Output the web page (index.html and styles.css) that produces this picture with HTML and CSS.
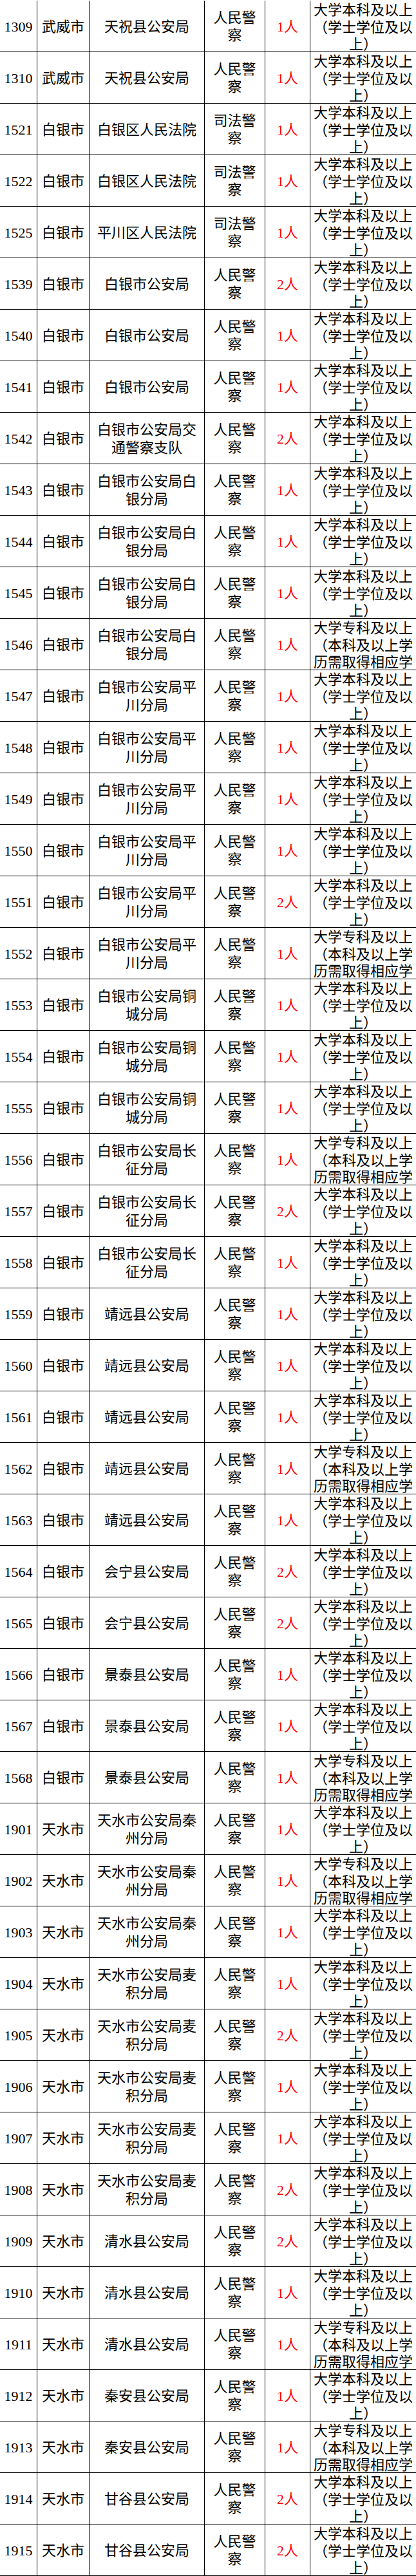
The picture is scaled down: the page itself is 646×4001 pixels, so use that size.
FILE: index.html
```html
<!DOCTYPE html>
<html lang="zh-CN">
<head>
<meta charset="utf-8">
<title>职位表</title>
<link rel="stylesheet" href="styles.css">
</head>
<body>
<div class="sheet" id="sheet"></div>
<script src="script.js"></script>
</body>
</html>
```

FILE: styles.css
```css
html, body {
  margin: 0;
  padding: 0;
  background: #ffffff;
}

.sheet {
  width: 646px;
  padding-top: 1px;
  font-family: "Liberation Serif", "Noto Sans CJK SC", serif;
  font-size: 22px;
  line-height: 26.7px;
  color: #000000;
}

.row {
  display: grid;
  grid-template-columns: 58px 81px 179px 94px 70px 164px;
  height: 80px;
  box-sizing: border-box;
  border-bottom: 1px solid #000000;
}

.cell {
  display: flex;
  align-items: center;
  justify-content: center;
  text-align: center;
  overflow: hidden;
  padding: 3px 4px 0;
  border-right: 1px solid #000000;
  min-width: 0;
}

.code {
  padding: 3px 0 0;
}

.unit {
  line-height: 28.3px;
}

.num {
  color: #ff0000;
}

.req {
  border-right: none;
  align-items: flex-start;
  padding: 2px 2px 0;
  line-height: 26.7px;
}
```

FILE: script.js
```js
var B = "大学本科及以上（学士学位及以上）";
var Z = "大学专科及以上（本科及以上学历需取得相应学位）";
var rows = [
["1309","武威市","天祝县公安局","人民警察",1,B],
["1310","武威市","天祝县公安局","人民警察",1,B],
["1521","白银市","白银区人民法院","司法警察",1,B],
["1522","白银市","白银区人民法院","司法警察",1,B],
["1525","白银市","平川区人民法院","司法警察",1,B],
["1539","白银市","白银市公安局","人民警察",2,B],
["1540","白银市","白银市公安局","人民警察",1,B],
["1541","白银市","白银市公安局","人民警察",1,B],
["1542","白银市","白银市公安局交通警察支队","人民警察",2,B],
["1543","白银市","白银市公安局白银分局","人民警察",1,B],
["1544","白银市","白银市公安局白银分局","人民警察",1,B],
["1545","白银市","白银市公安局白银分局","人民警察",1,B],
["1546","白银市","白银市公安局白银分局","人民警察",1,Z],
["1547","白银市","白银市公安局平川分局","人民警察",1,B],
["1548","白银市","白银市公安局平川分局","人民警察",1,B],
["1549","白银市","白银市公安局平川分局","人民警察",1,B],
["1550","白银市","白银市公安局平川分局","人民警察",1,B],
["1551","白银市","白银市公安局平川分局","人民警察",2,B],
["1552","白银市","白银市公安局平川分局","人民警察",1,Z],
["1553","白银市","白银市公安局铜城分局","人民警察",1,B],
["1554","白银市","白银市公安局铜城分局","人民警察",1,B],
["1555","白银市","白银市公安局铜城分局","人民警察",1,B],
["1556","白银市","白银市公安局长征分局","人民警察",1,Z],
["1557","白银市","白银市公安局长征分局","人民警察",2,B],
["1558","白银市","白银市公安局长征分局","人民警察",1,B],
["1559","白银市","靖远县公安局","人民警察",1,B],
["1560","白银市","靖远县公安局","人民警察",1,B],
["1561","白银市","靖远县公安局","人民警察",1,B],
["1562","白银市","靖远县公安局","人民警察",1,Z],
["1563","白银市","靖远县公安局","人民警察",1,B],
["1564","白银市","会宁县公安局","人民警察",2,B],
["1565","白银市","会宁县公安局","人民警察",2,B],
["1566","白银市","景泰县公安局","人民警察",1,B],
["1567","白银市","景泰县公安局","人民警察",1,B],
["1568","白银市","景泰县公安局","人民警察",1,Z],
["1901","天水市","天水市公安局秦州分局","人民警察",1,B],
["1902","天水市","天水市公安局秦州分局","人民警察",1,Z],
["1903","天水市","天水市公安局秦州分局","人民警察",1,B],
["1904","天水市","天水市公安局麦积分局","人民警察",1,B],
["1905","天水市","天水市公安局麦积分局","人民警察",2,B],
["1906","天水市","天水市公安局麦积分局","人民警察",1,B],
["1907","天水市","天水市公安局麦积分局","人民警察",1,B],
["1908","天水市","天水市公安局麦积分局","人民警察",2,B],
["1909","天水市","清水县公安局","人民警察",2,B],
["1910","天水市","清水县公安局","人民警察",1,B],
["1911","天水市","清水县公安局","人民警察",1,Z],
["1912","天水市","秦安县公安局","人民警察",1,B],
["1913","天水市","秦安县公安局","人民警察",1,Z],
["1914","天水市","甘谷县公安局","人民警察",2,B],
["1915","天水市","甘谷县公安局","人民警察",2,B]
];
var sheet = document.getElementById("sheet");
var html = "";
rows.forEach(function (r) {
  html += '<div class="row">' +
    '<div class="cell code">' + r[0] + '</div>' +
    '<div class="cell city">' + r[1] + '</div>' +
    '<div class="cell unit">' + r[2] + '</div>' +
    '<div class="cell post">' + r[3] + '</div>' +
    '<div class="cell num">' + r[4] + '人</div>' +
    '<div class="cell req"><span>' + r[5] + '</span></div>' +
    '</div>';
});
sheet.innerHTML = html;
```
